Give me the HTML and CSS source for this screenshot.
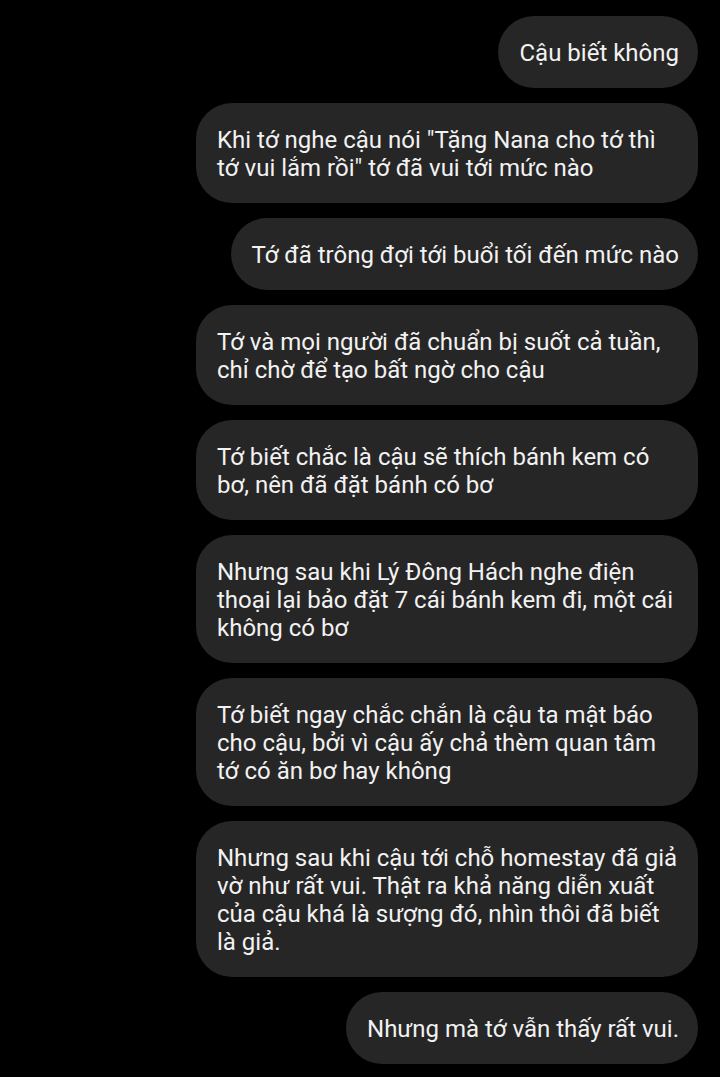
FILE: index.html
```html
<!DOCTYPE html>
<html lang="vi">
<head>
    <meta charset="UTF-8">
    <meta name="viewport" content="width=device-width, initial-scale=1.0">
    <title>Tin nhắn</title>
    <link rel="stylesheet" href="styles.css">
</head>
<body>
    <div class="chat">
        <div class="bubble">Cậu biết không</div>
        <div class="bubble">Khi tớ nghe cậu nói "Tặng Nana cho tớ thì tớ vui lắm rồi" tớ đã vui tới mức nào</div>
        <div class="bubble">Tớ đã trông đợi tới buổi tối đến mức nào</div>
        <div class="bubble">Tớ và mọi người đã chuẩn bị suốt cả tuần, chỉ chờ để tạo bất ngờ cho cậu</div>
        <div class="bubble">Tớ biết chắc là cậu sẽ thích bánh kem có bơ, nên đã đặt bánh có bơ</div>
        <div class="bubble">Nhưng sau khi Lý Đông Hách nghe điện thoại lại bảo đặt 7 cái bánh kem đi, một cái không có bơ</div>
        <div class="bubble">Tớ biết ngay chắc chắn là cậu ta mật báo cho cậu, bởi vì cậu ấy chả thèm quan tâm tớ có ăn bơ hay không</div>
        <div class="bubble">Nhưng sau khi cậu tới chỗ homestay đã giả vờ như rất vui. Thật ra khả năng diễn xuất của cậu khá là sượng đó, nhìn thôi đã biết là giả.</div>
        <div class="bubble">Nhưng mà tớ vẫn thấy rất vui.</div>
    </div>
</body>
</html>
```

FILE: styles.css
```css
body {
    margin: 0;
    padding: 0;
    background-color: #000;
    font-family: Roboto, "Noto Sans", sans-serif;
    color: #f2f2f2;
}
.chat {
    display: flex;
    flex-direction: column;
    align-items: flex-end;
    gap: 15px;
    padding: 16px 22px 0 0;
}
.bubble {
    max-width: 462px;
    padding: 23px 19px 21px 21px;
    background-color: #262626;
    border-radius: 36px;
    font-size: 24px;
    line-height: 28px;
}
```
